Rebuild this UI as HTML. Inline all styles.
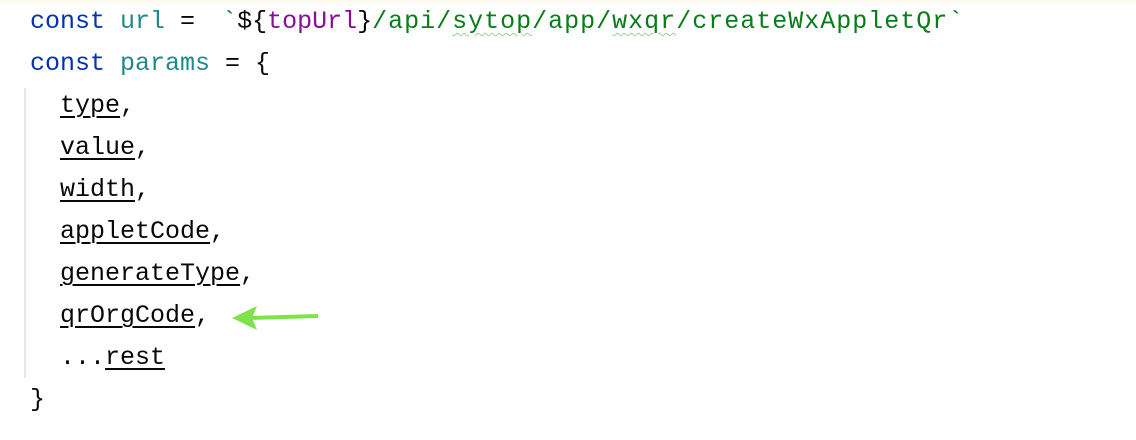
<!DOCTYPE html>
<html><head><meta charset="utf-8"><style>
html,body{margin:0;padding:0;background:#fff;width:1136px;height:440px;overflow:hidden;position:relative}
.top{position:absolute;left:0;top:0;width:1136px;height:3px;background:#fdf9ec}
.code{position:absolute;left:30px;top:1px;font-family:"Liberation Mono",monospace;font-size:25px;line-height:42px;color:#080808;white-space:pre}
.k{color:#0033b3}.v{color:#1f8a8a}.s{color:#067d17}.p{color:#871094}
.str{letter-spacing:1px}
u{text-decoration:underline;text-underline-offset:4px;text-decoration-thickness:2px}
.w{text-decoration:underline wavy #9ccf9c;text-decoration-thickness:1px;text-underline-offset:4px}
.guide{position:absolute;left:24px;top:88px;width:2px;height:290px;background:#e6e6e6}
</style></head><body>
<div class="top"></div>
<div class="guide"></div>
<div class="code"><span class="k">const</span> <span class="v">url</span> = <span class="s" style="margin-left:12px">`</span>${<span class="p">topUrl</span>}<span class="s str">/api/<span class="w">sytop</span>/app/<span class="w">wxqr</span>/createWxAppletQr`</span>
<span class="k">const</span> <span class="v">params</span> = {
  <u>type</u>,
  <u>value</u>,
  <u>width</u>,
  <u>appletCode</u>,
  <u>generateType</u>,
  <u>qrOrgCode</u>,
  ...<u>rest</u>
}</div>
<svg style="position:absolute;left:0;top:0" width="1136" height="440">
<path d="M232 318 L257 306 L252 318 L257 330 Z" fill="#7ee34a"/>
<path d="M250 316 L318 314 L318 318 L250 320 Z" fill="#7ee34a"/>
</svg>
</body></html>
